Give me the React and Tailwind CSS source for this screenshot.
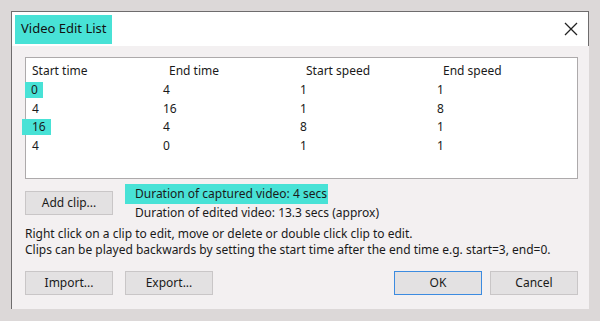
import React from 'react';

const rows = [
    ['0', '4', '1', '1'],
    ['4', '16', '1', '8'],
    ['16', '4', '8', '1'],
    ['4', '0', '1', '1'],
];

const font = { fontFamily: '"Noto Sans", "Open Sans", sans-serif' };

function Btn({ children, primary, className = '' }) {
    return (
        <button
            type="button"
            className={`h-[24px] w-[88px] text-[12px] text-[#1a1a1a] bg-[#e3e1e2] border ${primary ? 'border-[#3c8be0] border-[1.5px]' : 'border-[#c9c6c7]'} ${className}`}
        >
            {children}
        </button>
    );
}

export default function App() {
    return (
        <div className="w-[600px] h-[321px] bg-[#dcd8d8] pt-[11px] pl-[11px] overflow-hidden" style={font}>
            <div className="w-[578px] h-[298px] bg-[#f3f0f1] border-l border-t border-[#6e6c6d] flex flex-col overflow-hidden">
                <div className="h-[34px] bg-white border-r border-[#6e6c6d] flex items-center justify-between pl-[3px] pr-[10px]">
                    <div className="bg-[#48e2d6] h-[29px] px-[6px] flex items-center text-[13px] text-[#111] whitespace-nowrap">
                        Video Edit List
                    </div>
                    <svg width="14" height="14" viewBox="0 0 14 14" className="text-[#222]">
                        <path d="M1 1L13 13M13 1L1 13" stroke="currentColor" strokeWidth="1.3" />
                    </svg>
                </div>

                <div className="pl-[13px] pr-[11px] pt-[11px] text-[12px] text-[#1a1a1a] leading-none">
                    <div className="h-[122px] bg-white border border-[#adaaab] pt-[7px]">
                        <div className="grid grid-cols-[137px_137px_137px_1fr] pl-[6px] h-[16px]">
                            <span>Start time</span>
                            <span>End time</span>
                            <span>Start speed</span>
                            <span>End speed</span>
                        </div>
                        {rows.map((r, i) => (
                            <div key={i} className="grid grid-cols-[137px_137px_137px_1fr] h-[18.5px] items-center">
                                <span className="flex">
                                    <span className={i === 0 ? 'bg-[#48e2d6] pl-[6px] pr-[5px] py-[2px] -ml-[1px]' : i === 2 ? 'bg-[#48e2d6] pl-[10px] pr-[5px] py-[2px] -ml-[4px]' : 'pl-[6px]'}>
                                        {r[0]}
                                    </span>
                                </span>
                                <span>{r[1]}</span>
                                <span>{r[2]}</span>
                                <span>{r[3]}</span>
                            </div>
                        ))}
                    </div>

                    <div className="flex mt-[5px]">
                        <Btn className="mt-[7px]">Add clip...</Btn>
                        <div className="ml-[12px]">
                            <div className="bg-[#48e2d6] h-[20px] w-[203px] flex items-center pl-[10px]">
                                Duration of captured video: 4 secs
                            </div>
                            <div className="pl-[10px] mt-[3px]">
                                Duration of edited video: 13.3 secs (approx)
                            </div>
                        </div>
                    </div>

                    <div className="mt-[7px] leading-[16px]">
                        <p>Right click on a clip to edit, move or delete or double click clip to edit.</p>
                        <p>Clips can be played backwards by setting the start time after the end time e.g. start=3, end=0.</p>
                    </div>

                    <div className="flex items-center mt-[13px]">
                        <Btn>Import...</Btn>
                        <Btn className="ml-[12px]">Export...</Btn>
                        <Btn primary className="ml-auto">OK</Btn>
                        <Btn className="ml-[8px]">Cancel</Btn>
                    </div>
                </div>
            </div>
        </div>
    );
}
